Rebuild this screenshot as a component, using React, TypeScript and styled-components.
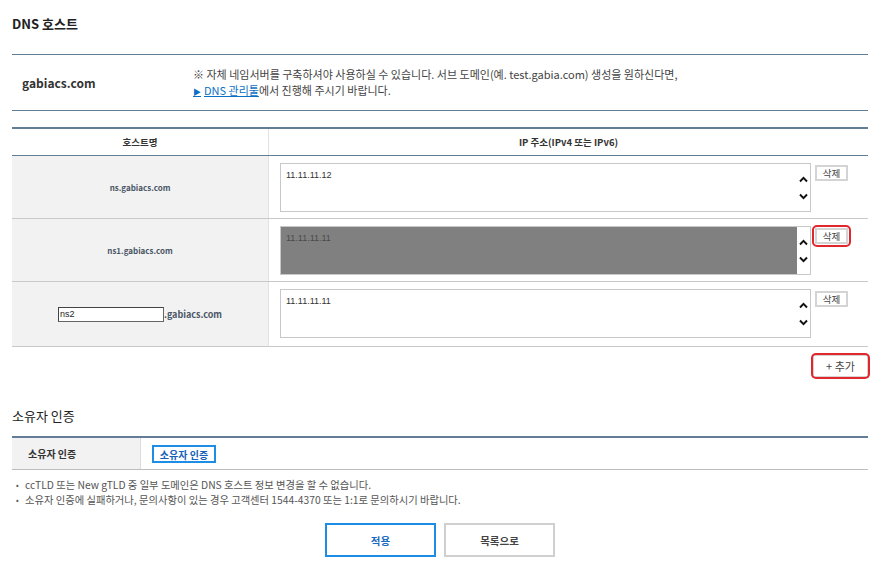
import styled, { createGlobalStyle } from 'styled-components';

const GlobalStyle = createGlobalStyle`
  body {
    margin: 0;
    background: #fff;
    font-family: "Noto Sans CJK KR", "Noto Sans", sans-serif;
    color: #333;
  }
`;

const Page = styled.div`
  padding: 0 12px;
`;

const SectionTitle = styled.h2`
  margin: 0;
  padding-top: 15px;
  font-size: 13px;
  line-height: 18px;
  font-weight: 700;
  color: #222;
`;

const InfoBox = styled.div`
  margin-top: 21px;
  height: 55px;
  display: flex;
  align-items: center;
  border-top: 1px solid #627d96;
  border-bottom: 1px solid #627d96;
`;

const InfoLabel = styled.div`
  width: 171px;
  padding-left: 10px;
  font-size: 12px;
  font-weight: 700;
  color: #333;
`;

const InfoNote = styled.div`
  font-size: 11px;
  line-height: 16px;
  color: #444;
`;

const Link = styled.a`
  color: #0b6fc4;
  text-decoration: underline;
  cursor: pointer;
`;

const Arrow = styled.span`
  font-size: 8px;
  margin-right: 3px;
`;

const HostTable = styled.div`
  margin-top: 16px;
  border-top: 2px solid #627d96;
`;

const HeadRow = styled.div`
  display: grid;
  grid-template-columns: 257px 1fr;
  height: 26px;
  border-bottom: 1px solid #627d96;
`;

const HeadCell = styled.div<{ $divider?: boolean }>`
  display: flex;
  align-items: center;
  justify-content: center;
  font-size: 9.5px;
  font-weight: 700;
  color: #333;
  border-right: ${(p) => (p.$divider ? '1px solid #e2e2e2' : 'none')};
`;

const Row = styled.div`
  display: grid;
  grid-template-columns: 257px 1fr;
  border-bottom: 1px solid #c9c9c9;
`;

const NameCell = styled.div`
  display: flex;
  align-items: center;
  justify-content: center;
  background: #f2f2f2;
  border-right: 1px solid #e2e2e2;
  font-size: 8px;
  font-weight: 700;
  color: #4a5666;
`;

const HostInput = styled.input`
  box-sizing: border-box;
  width: 106px;
  height: 15px;
  padding: 0 1px;
  border: 1px solid #666;
  border-top-color: #444;
  border-left-color: #444;
  font-family: "Liberation Sans", sans-serif;
  font-size: 9px;
  color: #222;
  outline: none;
`;

const Suffix = styled.span`
  font-size: 9px;
  font-weight: 700;
  color: #4a5666;
`;

const IpCell = styled.div<{ $bottom: number }>`
  display: flex;
  align-items: flex-start;
  gap: 4px;
  padding: 7px 20px ${(p) => p.$bottom}px 11px;
`;

const TextBox = styled.div<{ $disabled?: boolean }>`
  flex: 1;
  box-sizing: border-box;
  height: 49px;
  display: flex;
  border: 1px solid #c8c8c8;
  background: ${(p) => (p.$disabled ? '#808080' : '#fff')};
`;

const TextValue = styled.div<{ $disabled?: boolean }>`
  flex: 1;
  padding: 6px 5px;
  font-family: "Liberation Sans", sans-serif;
  font-size: 9px;
  line-height: 11px;
  color: ${(p) => (p.$disabled ? '#4a4a4a' : '#333')};
`;

const ScrollCol = styled.div`
  width: 13px;
  background: #fff;
  display: flex;
  flex-direction: column;
  align-items: center;
  justify-content: center;
  gap: 10px;
`;

const SmallButton = styled.button<{ $ring?: number }>`
  position: relative;
  box-sizing: border-box;
  padding: 0;
  background: #fff;
  border: 2px solid #d4d4d4;
  font-family: inherit;
  color: #444;
  cursor: pointer;

  &::after {
    content: '';
    display: ${(p) => (p.$ring ? 'block' : 'none')};
    position: absolute;
    inset: -${(p) => p.$ring ?? 0}px;
    border: 2px solid #e2262c;
    border-radius: 5px;
  }
`;

const DeleteButton = styled(SmallButton)`
  margin-top: 2px;
  width: 33px;
  height: 16px;
  font-size: 9.5px;
  line-height: 12px;
`;

const AddRow = styled.div`
  display: flex;
  justify-content: flex-end;
  padding-top: 7px;
  margin-right: -1px;
`;

const AddButton = styled(SmallButton)`
  width: 57px;
  height: 24px;
  font-size: 11px;
`;

const OwnerTitle = styled.h3`
  margin: 28px 0 0;
  font-size: 13px;
  line-height: 20px;
  font-weight: 400;
  color: #222;
`;

const OwnerTable = styled.div`
  margin-top: 10px;
  display: grid;
  grid-template-columns: 129px 1fr;
  height: 31px;
  border-top: 2px solid #627d96;
  border-bottom: 1px solid #bdbdbd;
`;

const OwnerLabel = styled.div`
  display: flex;
  align-items: center;
  padding-left: 16px;
  background: #f2f2f2;
  border-right: 1px solid #dcdcdc;
  font-size: 10px;
  font-weight: 700;
  color: #333;
`;

const OwnerCell = styled.div`
  display: flex;
  align-items: center;
  padding-left: 11px;
`;

const VerifyButton = styled.button`
  box-sizing: border-box;
  width: 64px;
  height: 18px;
  padding: 0;
  background: #fff;
  border: 2px solid #1e8de6;
  font-family: inherit;
  font-size: 10px;
  font-weight: 700;
  color: #1561b8;
  cursor: pointer;
`;

const NoteList = styled.ul`
  margin: 0;
  padding: 7px 0 0 4px;
  list-style: none;
`;

const Note = styled.li`
  display: flex;
  height: 15px;
  align-items: center;
  font-size: 10.3px;
  color: #555;

  &::before {
    content: '•';
    width: 9px;
    font-size: 8px;
  }
`;

const ButtonRow = styled.div`
  display: flex;
  justify-content: center;
  gap: 8px;
  padding-top: 16px;
`;

const ActionButton = styled.button<{ $primary?: boolean }>`
  box-sizing: border-box;
  width: 111px;
  height: 34px;
  padding: 0;
  background: #fff;
  border: 2px solid ${(p) => (p.$primary ? '#1e8de6' : '#cfcfcf')};
  font-family: inherit;
  font-size: 10.5px;
  font-weight: 700;
  color: ${(p) => (p.$primary ? '#1a6cc0' : '#444')};
  cursor: pointer;
`;

function Chevron({ up }: { up?: boolean }) {
  return (
    <svg width="9" height="7" viewBox="0 0 9 7">
      <path
        d={up ? 'M1 5.5 L4.5 1.8 L8 5.5' : 'M1 1.5 L4.5 5.2 L8 1.5'}
        fill="none"
        stroke="#111"
        strokeWidth="1.9"
      />
    </svg>
  );
}

type HostRow = {
  name: string;
  ip: string;
  editable?: boolean;
  disabled?: boolean;
  ring?: number;
  bottom: number;
};

const rows: HostRow[] = [
  { name: 'ns.gabiacs.com', ip: '11.11.11.12', bottom: 6 },
  { name: 'ns1.gabiacs.com', ip: '11.11.11.11', disabled: true, ring: 5, bottom: 6 },
  { name: 'ns2', ip: '11.11.11.11', editable: true, bottom: 8 },
];

export default function App() {
  return (
    <Page>
      <GlobalStyle />
      <SectionTitle>DNS 호스트</SectionTitle>

      <InfoBox>
        <InfoLabel>gabiacs.com</InfoLabel>
        <InfoNote>
          ※ 자체 네임서버를 구축하셔야 사용하실 수 있습니다. 서브 도메인(예. test.gabia.com) 생성을 원하신다면,
          <br />
          <Link>
            <Arrow>▶</Arrow>DNS 관리툴
          </Link>
          에서 진행해 주시기 바랍니다.
        </InfoNote>
      </InfoBox>

      <HostTable>
        <HeadRow>
          <HeadCell $divider>호스트명</HeadCell>
          <HeadCell>IP 주소(IPv4 또는 IPv6)</HeadCell>
        </HeadRow>
        {rows.map((r, i) => (
          <Row key={i}>
            <NameCell>
              {r.editable ? (
                <>
                  <HostInput defaultValue={r.name} />
                  <Suffix>.gabiacs.com</Suffix>
                </>
              ) : (
                r.name
              )}
            </NameCell>
            <IpCell $bottom={r.bottom}>
              <TextBox $disabled={r.disabled}>
                <TextValue $disabled={r.disabled}>{r.ip}</TextValue>
                <ScrollCol>
                  <Chevron up />
                  <Chevron />
                </ScrollCol>
              </TextBox>
              <DeleteButton $ring={r.ring}>삭제</DeleteButton>
            </IpCell>
          </Row>
        ))}
      </HostTable>

      <AddRow>
        <AddButton $ring={3}>+ 추가</AddButton>
      </AddRow>

      <OwnerTitle>소유자 인증</OwnerTitle>
      <OwnerTable>
        <OwnerLabel>소유자 인증</OwnerLabel>
        <OwnerCell>
          <VerifyButton>소유자 인증</VerifyButton>
        </OwnerCell>
      </OwnerTable>

      <NoteList>
        <Note>ccTLD 또는 New gTLD 중 일부 도메인은 DNS 호스트 정보 변경을 할 수 없습니다.</Note>
        <Note>소유자 인증에 실패하거나, 문의사항이 있는 경우 고객센터 1544-4370 또는 1:1로 문의하시기 바랍니다.</Note>
      </NoteList>

      <ButtonRow>
        <ActionButton $primary>적용</ActionButton>
        <ActionButton>목록으로</ActionButton>
      </ButtonRow>
    </Page>
  );
}
